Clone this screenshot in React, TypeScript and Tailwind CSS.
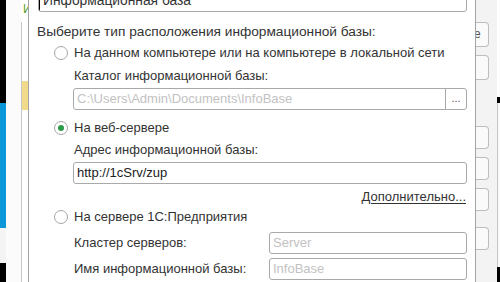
import React from "react";

// --- Radio option ---
function Radio({ checked, label }: { checked?: boolean; label: string }) {
  return (
    <div className="flex h-[18px] items-center pl-[17px]">
      <span className="flex h-[14px] w-[14px] items-center justify-center rounded-full border border-[#a6a6a6] bg-white">
        {checked && <span className="h-[6px] w-[6px] rounded-full bg-[#2d9a48]" />}
      </span>
      <span className="ml-[6px]">{label}</span>
    </div>
  );
}

// --- Text field ---
function Field({
  value,
  placeholder,
  className = "",
  textClass = "",
  picker,
}: {
  value?: string;
  placeholder?: string;
  className?: string;
  textClass?: string;
  picker?: boolean;
}) {
  return (
    <div
      className={`flex h-[22px] overflow-hidden rounded-[3px] border border-[#a9a9a9] bg-white ${className}`}
    >
      <div
        className={`flex-1 truncate pl-[3px] leading-[20px] ${value ? "text-[#222]" : "text-[#c2c2c2]"} ${textClass}`}
      >
        {value ?? placeholder}
      </div>
      {picker && (
        <div className="w-[21px] border-l border-[#a9a9a9] text-center text-[11px] leading-[18px] text-[#555]">
          ...
        </div>
      )}
    </div>
  );
}

export default function App() {
  return (
    <div
      className="flex h-[282px] w-[500px] overflow-hidden bg-white text-[13px] text-[#333]"
      style={{ fontFamily: '"Liberation Sans", Arial, sans-serif' }}
    >
      {/* Left background window */}
      <div className="flex w-[28px] shrink-0">
        <div className="flex w-[6px] flex-col">
          <div className="h-[103px] bg-black" />
          <div className="h-[125px] bg-[#0a97d9]" />
          <div className="h-[35px] bg-[#f4f4f4]" />
          <div className="flex-1 bg-black" />
        </div>
        <div className="w-[15px] bg-[#fbfbfb]" />
        <div className="flex w-[7px] flex-col bg-white">
          <div className="h-[22px] overflow-hidden pl-[2px] text-[12px] leading-[18px] text-[#5aa02c]">И</div>
          <div className="flex flex-1 flex-col border-l border-[#c8c8c8]">
            <div className="mt-[59px] h-[29px] bg-[#f2da8b]" />
          </div>
        </div>
      </div>

      {/* Dialog */}
      <div className="w-[448px] shrink-0 border-x border-[#a3a3a3] bg-white pl-[8px] pr-[8px]">
        <Field
          value="Информационная база"
          className="-mt-[10px] ml-[1px] border-[#9a9a9a]"
          textClass="border-l border-l-black pl-[2px] text-[13.8px] !text-[#333]"
        />
        <div className="mt-[10px] h-[20px] text-[13.7px] leading-[20px]">
          Выберите тип расположения информационной базы:
        </div>

        <div className="mt-[2px]">
          <Radio label="На данном компьютере или на компьютере в локальной сети" />
        </div>
        <div className="mt-[5px] h-[18px] pl-[37px] leading-[18px]">Каталог информационной базы:</div>
        <div className="mt-[3px] pl-[36px]">
          <Field placeholder="C:\Users\Admin\Documents\InfoBase" picker />
        </div>

        <div className="mt-[9px]">
          <Radio checked label="На веб-сервере" />
        </div>
        <div className="mt-[4px] h-[18px] pl-[37px] leading-[18px]">Адрес информационной базы:</div>
        <div className="mt-[3px] pl-[36px]">
          <Field value="http://1cSrv/zup" />
        </div>
        <div className="mt-[5px] flex h-[16px] justify-end pr-[1px] leading-[16px]">
          <span className="text-[#333] underline underline-offset-2">Дополнительно...</span>
        </div>

        <div className="mt-[3px]">
          <Radio label="На сервере 1С:Предприятия" />
        </div>
        <div className="mt-[6px] flex items-center pl-[37px]">
          <div className="w-[195px]">Кластер серверов:</div>
          <Field placeholder="Server" className="flex-1" />
        </div>
        <div className="mt-[4px] flex items-center pl-[37px]">
          <div className="w-[195px]">Имя информационной базы:</div>
          <Field placeholder="InfoBase" className="flex-1" />
        </div>
      </div>

      {/* Right background window */}
      <div className="flex flex-1 bg-[#f3f3f3]">
        <div className="flex w-[13px] flex-col">
          <div className="mt-[22px] h-[25px] overflow-hidden rounded-r-[4px] border border-l-0 border-[#bdbdbd] bg-[#fafafa] text-[12px] leading-[22px] text-[#555]">
            <span className="-ml-[2px]">е</span>
          </div>
          <div className="mt-[8px] h-[25px] rounded-r-[4px] border border-l-0 border-[#bdbdbd] bg-[#fafafa]" />
          <div className="mt-[46px] h-[23px] rounded-r-[4px] border border-l-0 border-[#bdbdbd] bg-[#fafafa]" />
          <div className="mt-[8px] h-[23px] rounded-r-[4px] border border-l-0 border-[#bdbdbd] bg-[#fafafa]" />
          <div className="mt-[8px] h-[23px] rounded-r-[4px] border border-l-0 border-[#bdbdbd] bg-[#fafafa]" />
          <div className="mt-[16px] h-[23px] rounded-r-[4px] border border-l-0 border-[#bdbdbd] bg-[#fafafa]" />
        </div>
        <div className="w-[8px]" />
        <div className="flex flex-1 flex-col">
          <div className="h-[97px] bg-white" />
          <div className="h-[6px] bg-black" />
          <div className="h-[164px] border-l border-[#c8c8c8] bg-[#fafafa]" />
          <div className="flex-1 bg-black" />
        </div>
      </div>
    </div>
  );
}
